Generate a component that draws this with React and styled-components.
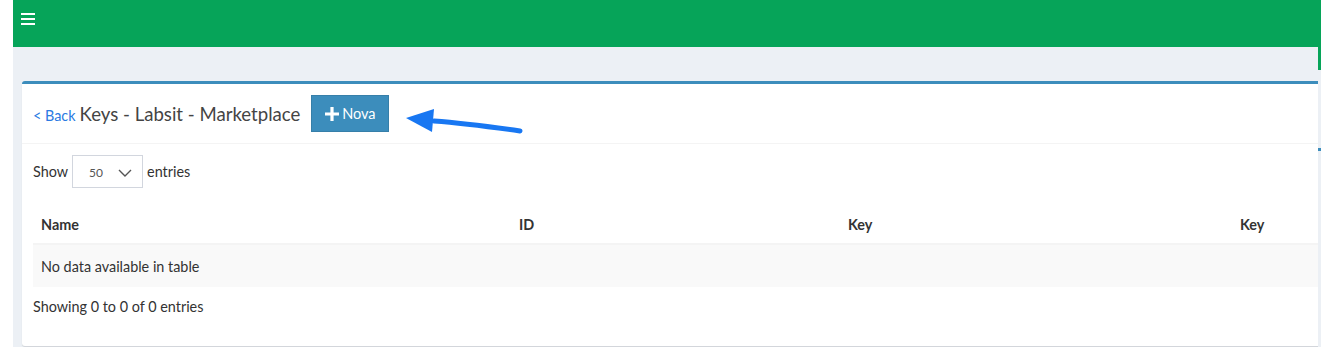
import React from "react";
import styled, { createGlobalStyle } from "styled-components";

const GlobalStyle = createGlobalStyle`
  body {
    margin: 0;
    background: #fff;
    font-family: Lato, "Liberation Sans", sans-serif;
    color: #333;
  }
`;

const Page = styled.div`
  display: flex;
  height: 347px;
  overflow: hidden;
`;

const LeftStrip = styled.div`
  width: 13px;
  background: #fff;
`;

const Main = styled.div`
  width: 1305px;
  display: flex;
  flex-direction: column;
  overflow: hidden;
`;

const TopBar = styled.div`
  height: 47px;
  background: #06a459;
  padding: 13px 0 0 8px;
  box-sizing: border-box;
`;

const Burger = styled.div`
  width: 14px;
  display: flex;
  flex-direction: column;
  gap: 3px;
  span {
    height: 2px;
    background: #fff;
  }
`;

const Content = styled.div`
  flex: 1;
  background: #ecf0f5;
  padding: 34px 0 0 9px;
`;

const Card = styled.div`
  width: 1320px;
  height: 262px;
  background: #fff;
  border-top: 3px solid #3c8dbc;
  border-radius: 3px 0 0 3px;
  box-shadow: 0 1px 1px rgba(0, 0, 0, 0.12);
  position: relative;
`;

const BoxHeader = styled.div`
  height: 60px;
  box-sizing: border-box;
  border-bottom: 1px solid #f4f4f4;
  display: flex;
  align-items: center;
  padding: 0 11px;
`;

const Back = styled.a`
  color: #2a7ae2;
  font-size: 14.4px;
  text-decoration: none;
  margin-top: 3px;
`;

const Title = styled.h3`
  margin: 0 0 0 4px;
  font-size: 18.6px;
  font-weight: 400;
  color: #444;
`;

const Button = styled.button`
  margin-left: 11px;
  width: 78px;
  height: 37px;
  background: #3c8dbc;
  border: 1px solid #367fa9;
  color: #fff;
  font-family: inherit;
  font-size: 14.5px;
  display: flex;
  align-items: center;
  justify-content: center;
  gap: 3px;
  padding: 0;
`;

const Arrow = styled.svg`
  position: absolute;
  left: 360px;
  top: 22px;
`;

const BoxBody = styled.div`
  padding: 11px 0 0 11px;
`;

const LengthRow = styled.div`
  display: flex;
  align-items: center;
  font-size: 14.4px;
  gap: 4px;
`;

const Select = styled.div`
  width: 71px;
  height: 33px;
  box-sizing: border-box;
  border: 1px solid #d2d6de;
  display: flex;
  align-items: center;
  justify-content: space-between;
  padding: 2px 10px 0 16px;
  font-size: 12px;
  color: #555;
`;

const Table = styled.table`
  margin-top: 18px;
  width: 1300px;
  border-collapse: collapse;
  font-size: 14.4px;
  table-layout: fixed;
`;

const Th = styled.th`
  box-sizing: border-box;
  text-align: left;
  font-weight: 700;
  color: #333;
  height: 38px;
  padding: 0 8px;
  border-bottom: 2px solid #f4f4f4;
  width: ${(p) => (p.w ? `${p.w}px` : "auto")};
`;

const Td = styled.td`
  height: 42px;
  padding: 0 8px;
  background: #f9f9f9;
  color: #333;
`;

const Info = styled.div`
  margin-top: 10px;
  font-size: 14.4px;
  line-height: 20px;
`;

const EdgeStrip = styled.div`
  width: 3px;
  display: flex;
  flex-direction: column;
`;

const EdgePart = styled.div`
  height: ${(p) => p.h}px;
  background: ${(p) => p.bg};
  flex: ${(p) => (p.h ? "none" : 1)};
`;

export default function App() {
  return (
    <Page>
      <GlobalStyle />
      <LeftStrip />
      <Main>
        <TopBar>
          <Burger>
            <span />
            <span />
            <span />
          </Burger>
        </TopBar>
        <Content>
          <Card>
            <BoxHeader>
              <Back href="#">&lt; Back</Back>
              <Title>Keys - Labsit - Marketplace</Title>
              <Button>
                <svg width="14" height="14" viewBox="0 0 14 14">
                  <path d="M7 0v14M0 7h14" stroke="#fff" strokeWidth="3.2" />
                </svg>
                Nova
              </Button>
            </BoxHeader>
            <Arrow width="145" height="40" viewBox="0 0 145 40">
              <path
                d="M52 15 C80 17, 110 21, 138 25"
                stroke="#1877f2"
                strokeWidth="5"
                strokeLinecap="round"
                fill="none"
              />
              <path d="M24 12 L52 3 L50 26 Z" fill="#1877f2" />
            </Arrow>
            <BoxBody>
              <LengthRow>
                Show
                <Select>
                  50
                  <svg width="14" height="8" viewBox="0 0 14 8">
                    <path d="M1 1l6 6 6-6" stroke="#555" strokeWidth="1.4" fill="none" />
                  </svg>
                </Select>
                entries
              </LengthRow>
              <Table>
                <thead>
                  <tr>
                    <Th w={478}>Name</Th>
                    <Th w={329}>ID</Th>
                    <Th w={392}>Key</Th>
                    <Th>Key</Th>
                  </tr>
                </thead>
                <tbody>
                  <tr>
                    <Td colSpan={4}>No data available in table</Td>
                  </tr>
                </tbody>
              </Table>
              <Info>Showing 0 to 0 of 0 entries</Info>
            </BoxBody>
          </Card>
        </Content>
      </Main>
      <EdgeStrip>
        <EdgePart h={70} bg="#06a459" />
        <EdgePart h={78} bg="#ecf0f5" />
        <EdgePart h={3} bg="#3c8dbc" />
        <EdgePart bg="#ecf0f5" />
      </EdgeStrip>
    </Page>
  );
}
